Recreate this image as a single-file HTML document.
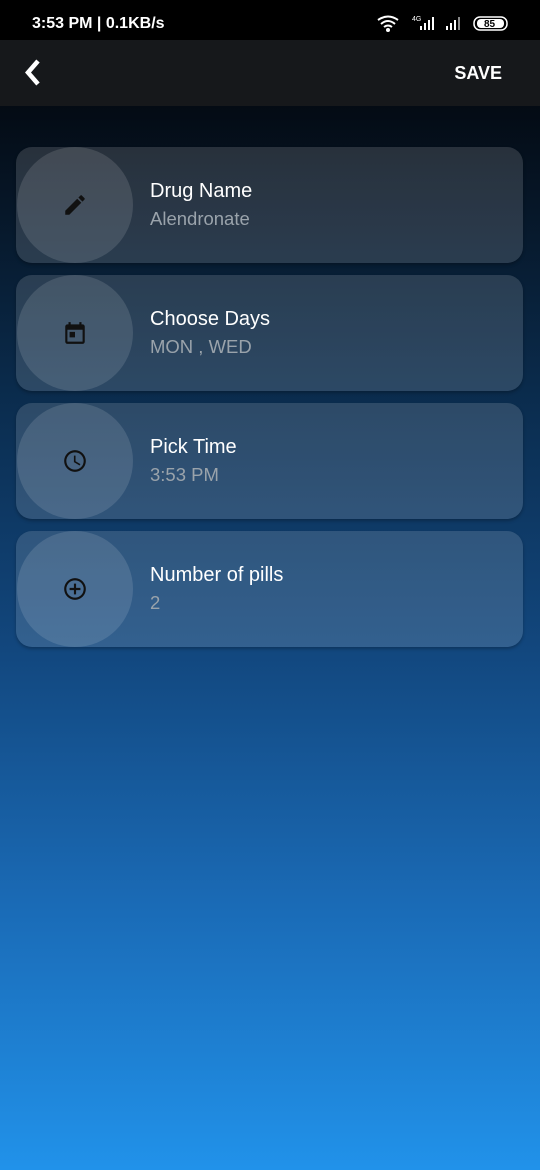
<!DOCTYPE html>
<html><head><meta charset="utf-8"><style>
*{margin:0;padding:0;box-sizing:border-box}
body{width:540px;height:1170px;overflow:hidden;font-family:"Liberation Sans",sans-serif;background:linear-gradient(180deg,#040b14 106px,#0a2a4a 380px,#12477e 650px,#1a6ab5 900px,#2192ea 1170px);position:relative}
.sb{position:absolute;top:0;left:0;width:540px;height:40px;background:#000;color:#fff}
.sb .t{position:absolute;left:32px;top:15px;font-size:16px;font-weight:bold}
.ab{position:absolute;top:40px;left:0;width:540px;height:66px;background:#16181b}
.save{position:absolute;right:38px;top:23px;color:#fff;font-size:18px;font-weight:bold}
.card{position:absolute;left:16px;width:507px;height:116px;border-radius:16px;background:rgba(255,255,255,0.14);box-shadow:0 2px 3px rgba(0,0,0,0.25);overflow:hidden}
.circ{position:absolute;left:1px;top:0;width:116px;height:116px;border-radius:50%;background:rgba(255,255,255,0.12)}
.circ svg{position:absolute;left:45px;top:45px}
.ti{position:absolute;left:134px;top:33px;color:#fff;font-size:20px}
.su{position:absolute;left:134px;top:61px;color:#9aa3ab;font-size:18.5px}
</style></head><body>
<div class="sb"><div class="t">3:53 PM | 0.1KB/s</div>
<svg style="position:absolute;left:376px;top:14px" width="135" height="20">
<path d="M2 6 Q12 -1 22 6 M5 10 Q12 4 19 10 M8 13 Q12 10 16 13" stroke="#fff" stroke-width="2" fill="none"/><circle cx="12" cy="16" r="2" fill="#fff"/>
<text x="36" y="7" fill="#fff" font-size="7" font-family="Liberation Sans">4G</text>
<rect x="44" y="12" width="2" height="4" fill="#fff"/><rect x="48" y="9" width="2" height="7" fill="#fff"/><rect x="52" y="6" width="2" height="10" fill="#fff"/><rect x="56" y="3" width="2" height="13" fill="#fff"/>
<rect x="70" y="12" width="2" height="4" fill="#fff"/><rect x="74" y="9" width="2" height="7" fill="#fff"/><rect x="78" y="6" width="2" height="10" fill="#fff"/><rect x="82" y="3" width="2" height="13" fill="#888"/>
<rect x="98" y="3" width="33" height="13" rx="6" fill="none" stroke="#fff" stroke-width="1.5"/><rect x="101" y="5" width="27" height="9" rx="4" fill="#fff"/>
<text x="108" y="13" fill="#000" font-size="10" font-weight="bold" font-family="Liberation Sans">85</text></svg></div>
<div class="ab"><svg style="position:absolute;left:22px;top:18px" width="22" height="30"><path d="M16 3 L6 14.5 L16 26" stroke="#fff" stroke-width="4.5" fill="none"/></svg><div class="save">SAVE</div></div>

<div class="card" style="top:147px"><div class="circ"><svg width="26" height="26" viewBox="0 0 24 24"><path d="M3 17.25V21h3.75L17.81 9.94l-3.75-3.75L3 17.25zM20.71 7.04a1 1 0 000-1.41l-2.34-2.34a1 1 0 00-1.41 0l-1.83 1.83 3.75 3.75 1.83-1.83z" fill="#111"/></svg></div><div class="ti">Drug Name</div><div class="su">Alendronate</div></div>
<div class="card" style="top:275px"><div class="circ"><svg width="26" height="26" viewBox="0 0 24 24"><path d="M19 4h-1V2h-2v2H8V2H6v2H5a2 2 0 00-2 2v14a2 2 0 002 2h14a2 2 0 002-2V6a2 2 0 00-2-2zm0 16H5V9h14v11zM7 11h5v5H7z" fill="#111"/></svg></div><div class="ti">Choose Days</div><div class="su">MON , WED</div></div>
<div class="card" style="top:403px"><div class="circ"><svg width="26" height="26" viewBox="0 0 24 24"><path d="M12 2a10 10 0 100 20 10 10 0 000-20zm0 18a8 8 0 110-16 8 8 0 010 16zm.5-13H11v6l5.25 3.15.75-1.23-4.5-2.67z" fill="#111"/></svg></div><div class="ti">Pick Time</div><div class="su">3:53 PM</div></div>
<div class="card" style="top:531px"><div class="circ"><svg width="26" height="26" viewBox="0 0 24 24"><path d="M13 7h-2v4H7v2h4v4h2v-4h4v-2h-4V7zm-1-5a10 10 0 100 20 10 10 0 000-20zm0 18a8 8 0 110-16 8 8 0 010 16z" fill="#111"/></svg></div><div class="ti">Number of pills</div><div class="su">2</div></div>
</body></html>
